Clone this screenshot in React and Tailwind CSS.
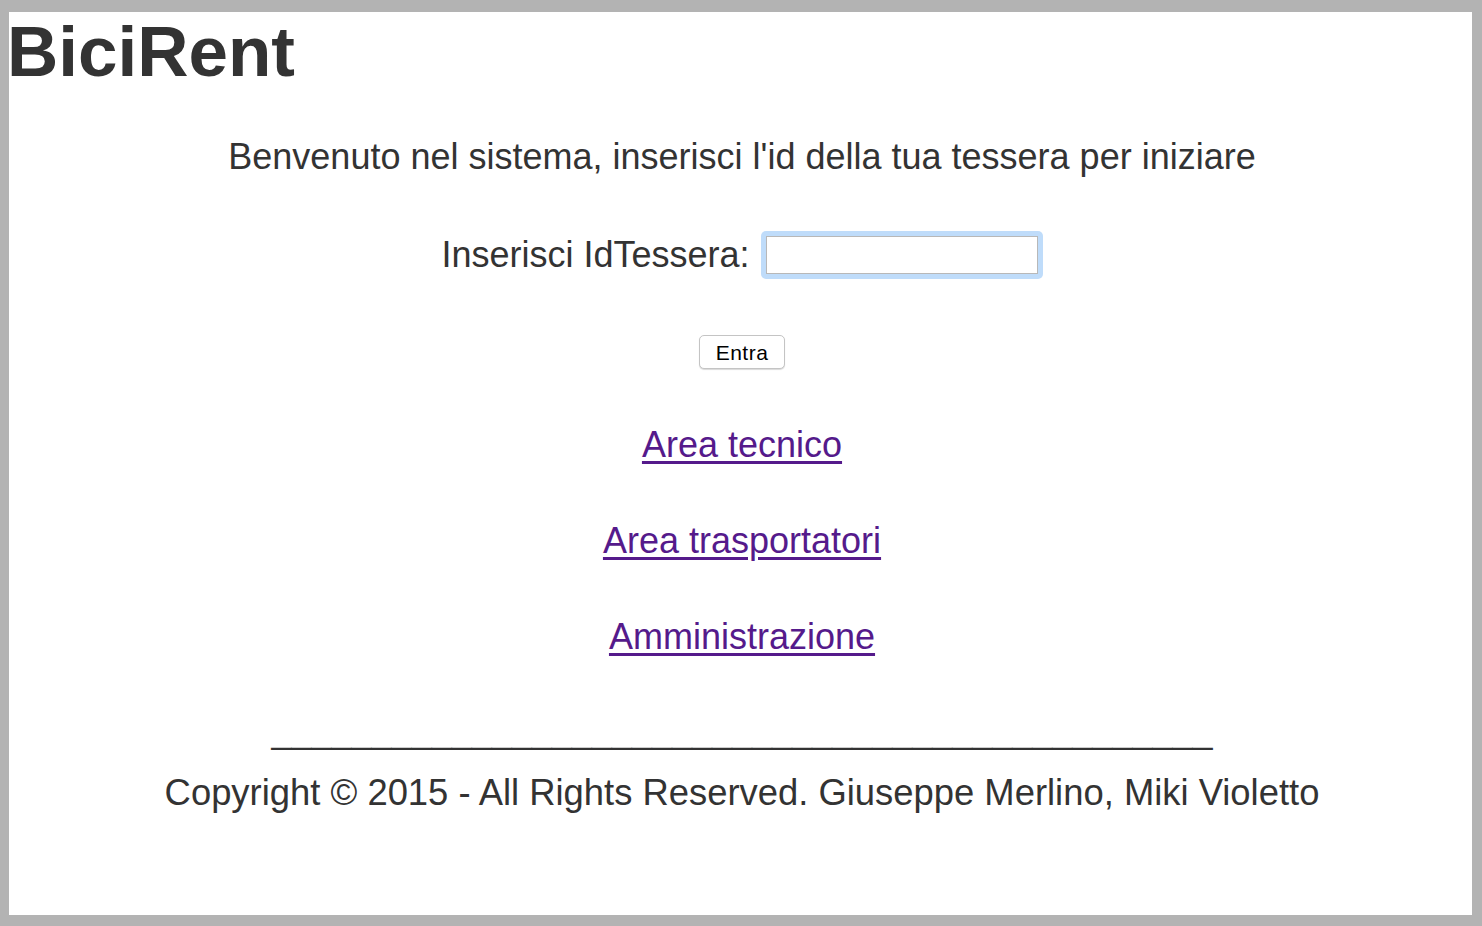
import React, { useState } from 'react';

const App = () => {
    const [idTessera, setIdTessera] = useState('');

    const handleSubmit = (event) => {
        event.preventDefault();
    };

    return (
        <div className="min-h-screen bg-[#b3b3b3] pt-[12px] pl-[9px] pr-[10px] pb-[11px]">
            <div
                className="h-[903px] bg-white text-[#333333]"
                style={{ fontFamily: '"Liberation Sans", Arial, Helvetica, sans-serif' }}
            >
                <h1 className="text-[71px] font-bold leading-[70px] pt-[5px] -ml-[2px]">BiciRent</h1>

                <div className="flex flex-col items-center text-[36px] leading-[40px] pl-[3px]">
                    <p className="mt-[50px]">Benvenuto nel sistema, inserisci l'id della tua tessera per iniziare</p>

                    <form className="flex flex-col items-center" onSubmit={handleSubmit}>
                        <div className="flex items-center mt-[54px]">
                            <label className="mr-[11px]">Inserisci IdTessera:</label>
                            <div className="rounded-[5px] bg-[#bfdcfa] p-[5px]">
                                <input
                                    type="text"
                                    className="block w-[272px] h-[38px] border border-[#b8b8b8] bg-white outline-none text-[20px] px-1"
                                    value={idTessera}
                                    onChange={(e) => setIdTessera(e.target.value)}
                                />
                            </div>
                        </div>
                        <button
                            type="submit"
                            className="mt-[56px] w-[86px] h-[34px] rounded-[5px] border border-[#c4c4c4] bg-white text-[21px] tracking-[0.5px] leading-none text-black shadow-[0_1px_1px_rgba(0,0,0,0.15)]"
                        >
                            Entra
                        </button>
                    </form>

                    <a href="#" className="mt-[56px] text-[#551a8b] underline underline-offset-[4px]">Area tecnico</a>
                    <a href="#" className="mt-[56px] text-[#551a8b] underline underline-offset-[4px]">Area trasportatori</a>
                    <a href="#" className="mt-[56px] text-[#551a8b] underline underline-offset-[4px]">Amministrazione</a>

                    <p className="mt-[54px]">_______________________________________________</p>
                    <p className="mt-[22px] text-[36.4px]">Copyright © 2015 - All Rights Reserved. Giuseppe Merlino, Miki Violetto</p>
                </div>
            </div>
        </div>
    );
};

export default App;
